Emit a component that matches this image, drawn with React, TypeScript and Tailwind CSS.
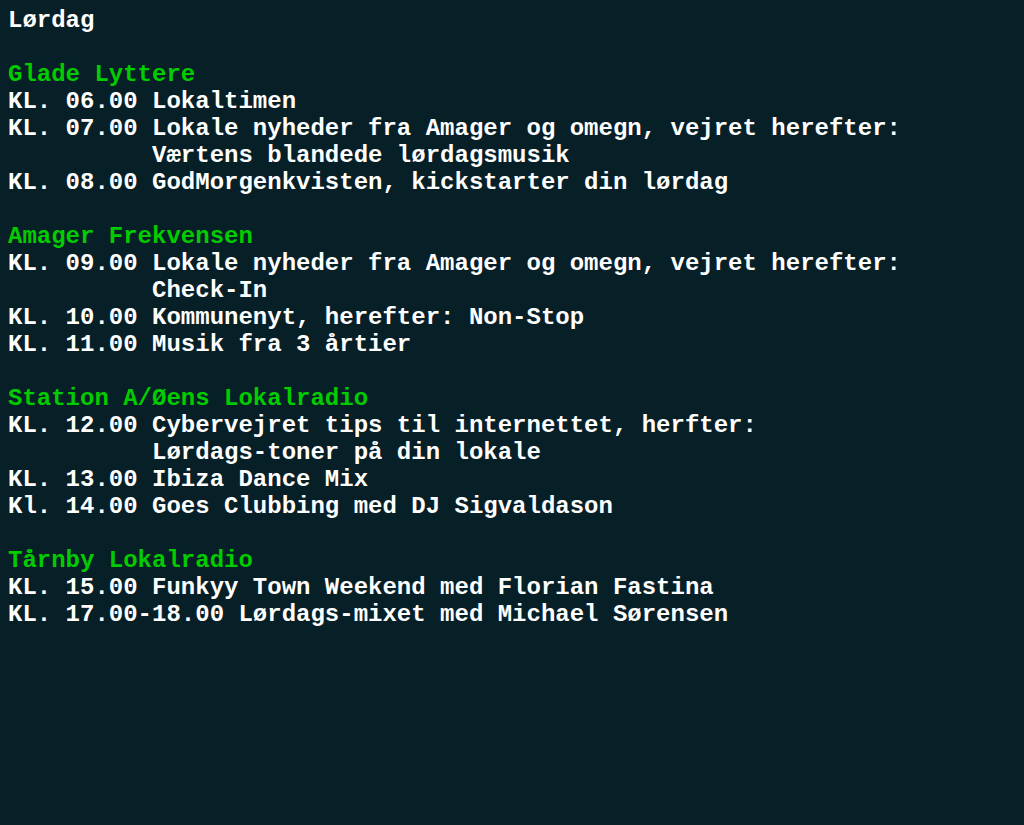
type Line = { time?: string; text: string };
type Block = { title: string; lines: Line[] };

const blocks: Block[] = [
    {
        title: 'Glade Lyttere',
        lines: [
            { time: 'KL. 06.00', text: 'Lokaltimen' },
            { time: 'KL. 07.00', text: 'Lokale nyheder fra Amager og omegn, vejret herefter:' },
            { text: 'Værtens blandede lørdagsmusik' },
            { time: 'KL. 08.00', text: 'GodMorgenkvisten, kickstarter din lørdag' },
        ],
    },
    {
        title: 'Amager Frekvensen',
        lines: [
            { time: 'KL. 09.00', text: 'Lokale nyheder fra Amager og omegn, vejret herefter:' },
            { text: 'Check-In' },
            { time: 'KL. 10.00', text: 'Kommunenyt, herefter: Non-Stop' },
            { time: 'KL. 11.00', text: 'Musik fra 3 årtier' },
        ],
    },
    {
        title: 'Station A/Øens Lokalradio',
        lines: [
            { time: 'KL. 12.00', text: 'Cybervejret tips til internettet, herfter:' },
            { text: 'Lørdags-toner på din lokale' },
            { time: 'KL. 13.00', text: 'Ibiza Dance Mix' },
            { time: 'Kl. 14.00', text: 'Goes Clubbing med DJ Sigvaldason' },
        ],
    },
    {
        title: 'Tårnby Lokalradio',
        lines: [
            { time: 'KL. 15.00', text: 'Funkyy Town Weekend med Florian Fastina' },
            { time: 'KL. 17.00-18.00', text: 'Lørdags-mixet med Michael Sørensen' },
        ],
    },
];

const App = () => {
    return (
        <div className="min-h-[825px] w-full bg-[#071f27] px-2 pt-[7px] text-white font-bold text-[24px] leading-[27px] whitespace-pre font-['Liberation_Mono','Courier_New',monospace]">
            <div>Lørdag</div>
            {blocks.map((b) => (
                <div key={b.title}>
                    <div>&nbsp;</div>
                    <div className="text-[#00cc00]">{b.title}</div>
                    {b.lines.map((l, i) => (
                        <div key={i}>
                            {(l.time ?? '         ') + ' ' + l.text}
                        </div>
                    ))}
                </div>
            ))}
        </div>
    );
};

export default App;
